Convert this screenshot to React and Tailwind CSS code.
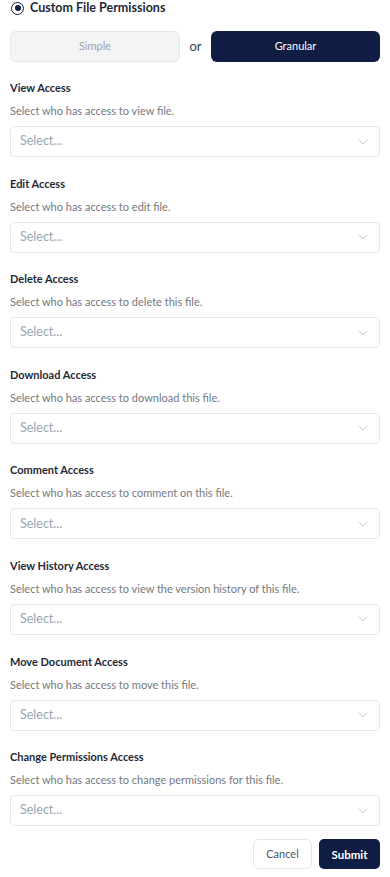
import React from "react";

const sections = [
  ["View Access", "Select who has access to view file."],
  ["Edit Access", "Select who has access to edit file."],
  ["Delete Access", "Select who has access to delete this file."],
  ["Download Access", "Select who has access to download this file."],
  ["Comment Access", "Select who has access to comment on this file."],
  ["View History Access", "Select who has access to view the version history of this file."],
  ["Move Document Access", "Select who has access to move this file."],
  ["Change Permissions Access", "Select who has access to change permissions for this file."],
];

function Chevron() {
  return (
    <svg width="10" height="6" viewBox="0 0 10 6" fill="none">
      <path d="M1 1l4 4 4-4" stroke="#c8ccd2" strokeWidth="1" strokeLinecap="round" strokeLinejoin="round" />
    </svg>
  );
}

export default function App() {
  return (
    <div className="w-[390px] bg-white px-[10px] text-[#1f2937]" style={{ fontFamily: 'Lato, "Noto Sans", sans-serif' }}>
      <div className="flex h-4 items-center gap-[6px] pl-px">
        <div className="flex h-[13px] w-[13px] items-center justify-center rounded-full border-[1.5px] border-[#0f1d43]">
          <div className="h-[6px] w-[6px] rounded-full bg-[#0f1d43]" />
        </div>
        <span className="text-[12.5px] font-bold leading-4 text-[#1f2937]">Custom File Permissions</span>
      </div>
      <div className="mt-[15px] flex h-[31px] items-center">
        <button className="flex h-full w-[170px] items-center justify-center rounded-[6px] border border-[#e5e7eb] bg-[#f4f4f5] text-[11px] text-[#9ca3af]">
          Simple
        </button>
        <span className="w-[31px] text-center text-[13px] text-[#374151]">or</span>
        <button className="flex h-full flex-1 items-center justify-center rounded-[6px] bg-[#0f1d43] text-[11px] text-white">
          Granular
        </button>
      </div>
      <div className="mt-[18px] flex flex-col gap-[18.6px]">
        {sections.map(([label, desc]) => (
          <div key={label} className="flex flex-col">
            <div className="h-4 text-[11px] font-bold leading-4 text-[#1f2937]">{label}</div>
            <div className="mt-[7px] h-4 text-[11px] leading-4 text-[#737880]">{desc}</div>
            <div className="mt-[7px] flex h-[31px] items-center justify-between rounded-[4px] border border-[#e5e7eb] bg-white pl-[9px] pr-[11px]">
              <span className="text-[12.5px] text-[#9ca3af]">Select...</span>
              <Chevron />
            </div>
          </div>
        ))}
      </div>
      <div className="mt-[13px] flex justify-end gap-[7px]">
        <button className="h-[30px] w-[59px] rounded-[5px] border border-[#e5e7eb] bg-white text-[11px] text-[#4b5563]">Cancel</button>
        <button className="h-[30px] w-[61px] rounded-[5px] bg-[#0f1d43] text-[11.5px] font-bold text-white">Submit</button>
      </div>
    </div>
  );
}
